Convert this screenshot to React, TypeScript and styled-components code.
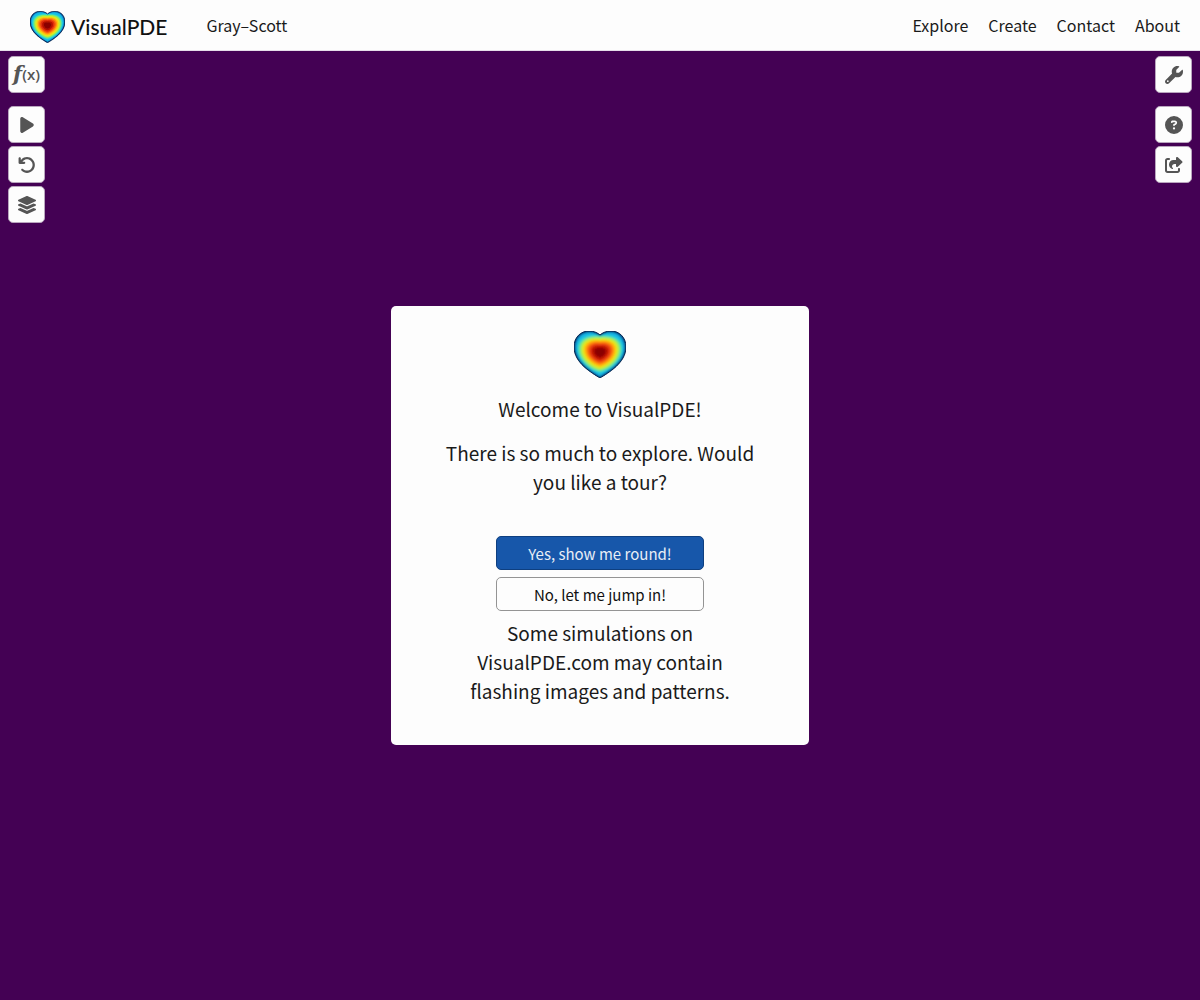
import React, { useId } from "react";
import styled, { createGlobalStyle, css } from "styled-components";
import { FaLayerGroup } from "react-icons/fa";
import {
  FaPlay,
  FaArrowRotateLeft,
  FaWrench,
  FaCircleQuestion,
  FaShareFromSquare,
} from "react-icons/fa6";

const GlobalStyle = createGlobalStyle`
  *, *::before, *::after { box-sizing: border-box; }
  body {
    margin: 0;
    background: #440154;
    color: #1a1a1a;
    font-family: "Noto Sans CJK SC", "Noto Sans", sans-serif;
  }
`;

const Page = styled.div`
  display: flex;
  flex-direction: column;
  min-height: 100vh;
`;

const Header = styled.header`
  display: flex;
  align-items: center;
  height: 51px;
  padding: 0 20px 0 30px;
  background: #fdfdfd;
  border-bottom: 1px solid #e6dde9;
`;

const Brand = styled.a`
  display: flex;
  align-items: center;
  gap: 6px;
  padding-top: 4px;
  color: #111;
  font: 500 21px/32px Lato, sans-serif;
  text-decoration: none;
`;

const SimulationName = styled.span`
  margin-left: 39px;
  font-size: 16px;
  line-height: 24px;
`;

const Nav = styled.nav`
  display: flex;
  gap: 20px;
  margin-left: auto;
`;

const NavLink = styled.a`
  color: #1a1a1a;
  font-size: 16px;
  line-height: 24px;
  text-decoration: none;
`;

const Simulation = styled.main`
  position: relative;
  flex: 1;
  display: grid;
  place-items: center;
`;

const Toolbar = styled.div<{ $side: "left" | "right" }>`
  position: absolute;
  top: 5px;
  ${(p) => p.$side}: 8px;
  display: flex;
  flex-direction: column;
  gap: 13px;
`;

const ToolGroup = styled.div`
  display: flex;
  flex-direction: column;
  gap: 3px;
`;

const ToolButton = styled.button`
  display: flex;
  align-items: center;
  justify-content: center;
  width: 37px;
  height: 37px;
  padding: 0;
  border: 1px solid #b9a6be;
  border-radius: 5px;
  background: #fdfdfd;
  color: #555;

  svg {
    flex: none;
    width: auto;
    height: 18px;
  }
`;

const FunctionLabel = styled.span`
  display: flex;
  align-items: center;
  padding-bottom: 2px;
  color: #555;
  font: 600 15px/22px "Open Sans", sans-serif;

  em {
    font: italic 700 21px/22px "DejaVu Serif", serif;
  }
`;

const Dialog = styled.section`
  display: flex;
  flex-direction: column;
  align-items: center;
  width: min(418px, calc(100% - 112px));
  padding: 25px 52px 40px;
  border-radius: 5px;
  background: #fdfdfd;
  text-align: center;
`;

const Message = styled.p`
  margin: 0;
  font-size: 19px;
  line-height: 29px;
`;

const Intro = styled.div`
  display: flex;
  flex-direction: column;
  gap: 15px;
  margin: 16px 0 40px;
`;

const Choices = styled.div`
  display: flex;
  flex-direction: column;
  gap: 7px;
  width: 208px;
  margin-bottom: 7px;
`;

const ChoiceButton = styled.button<{ $primary?: boolean }>`
  height: 34px;
  padding: 2px 12px 0;
  border: 1px solid #949494;
  border-radius: 5px;
  background: #fdfdfd;
  color: #111;
  font: 15px/24px "Noto Sans CJK SC", "Noto Sans", sans-serif;
  ${(p) =>
    p.$primary &&
    css`
      border-color: #0e3f80;
      background: #1757aa;
      color: #e8eef6;
    `}
`;

const HEART =
  "M26 47 C18 42 0 32 0 16 C0 6 7 0 15 0 C20 0 24 2 26 4 C28 2 32 0 37 0 C45 0 52 6 52 16 C52 32 34 42 26 47 Z";

// Inner contours lose the notch and become a rounded triangle.
const CORE =
  "M26 45 C16 43 0 32 0 17 C0 4 14 0 26 2 C38 0 52 4 52 17 C52 32 36 43 26 45 Z";

const BANDS: [number, string][] = [
  [1, "#07306a"],
  [0.97, "#0868ac"],
  [0.94, "#0c96d6"],
  [0.91, "#18bce6"],
  [0.86, "#2ed8d0"],
  [0.81, "#62e694"],
  [0.76, "#9cec52"],
  [0.7, "#dcec20"],
  [0.62, "#ffc40c"],
  [0.55, "#ff920a"],
  [0.48, "#f85c0a"],
  [0.4, "#df2d08"],
  [0.31, "#b51006"],
  [0.21, "#8a0404"],
];

function HeartLogo({ width }: { width: number }) {
  const id = useId().replace(/:/g, "");
  return (
    <svg width={width} height={Math.round((width * 47) / 52)} viewBox="0 0 52 47" aria-hidden="true">
      <defs>
        <clipPath id={`${id}c`}>
          <path d={HEART} />
        </clipPath>
        <filter id={`${id}b`} x="-10%" y="-10%" width="120%" height="120%">
          <feGaussianBlur stdDeviation="0.8" />
        </filter>
      </defs>
      <path d={HEART} fill="#062b5c" />
      <g clipPath={`url(#${id}c)`}>
        <g filter={`url(#${id}b)`}>
          {BANDS.map(([scale, color]) => (
            <path
              key={scale}
              d={scale > 0.88 ? HEART : CORE}
              fill={color}
              transform={`translate(26 21) scale(${scale}) translate(-26 -21)`}
            />
          ))}
        </g>
      </g>
      <path d={HEART} fill="none" stroke="#082a55" strokeWidth="1" />
    </svg>
  );
}

export default function App() {
  return (
    <Page>
      <GlobalStyle />
      <Header>
        <Brand href="#">
          <HeartLogo width={35} />
          VisualPDE
        </Brand>
        <SimulationName>Gray–Scott</SimulationName>
        <Nav>
          <NavLink href="#explore">Explore</NavLink>
          <NavLink href="#create">Create</NavLink>
          <NavLink href="#contact">Contact</NavLink>
          <NavLink href="#about">About</NavLink>
        </Nav>
      </Header>
      <Simulation>
        <Toolbar $side="left">
          <ToolButton aria-label="Equations">
            <FunctionLabel>
              <em>f</em>(x)
            </FunctionLabel>
          </ToolButton>
          <ToolGroup>
            <ToolButton aria-label="Play"><FaPlay /></ToolButton>
            <ToolButton aria-label="Reset"><FaArrowRotateLeft /></ToolButton>
            <ToolButton aria-label="Views"><FaLayerGroup /></ToolButton>
          </ToolGroup>
        </Toolbar>
        <Toolbar $side="right">
          <ToolButton aria-label="Settings"><FaWrench /></ToolButton>
          <ToolGroup>
            <ToolButton aria-label="Help"><FaCircleQuestion /></ToolButton>
            <ToolButton aria-label="Share"><FaShareFromSquare /></ToolButton>
          </ToolGroup>
        </Toolbar>
        <Dialog role="dialog" aria-label="Welcome">
          <HeartLogo width={52} />
          <Intro>
            <Message>Welcome to VisualPDE!</Message>
            <Message>There is so much to explore. Would you like a tour?</Message>
          </Intro>
          <Choices>
            <ChoiceButton $primary>Yes, show me round!</ChoiceButton>
            <ChoiceButton>No, let me jump in!</ChoiceButton>
          </Choices>
          <Message>Some simulations on VisualPDE.com may contain flashing images and patterns.</Message>
        </Dialog>
      </Simulation>
    </Page>
  );
}
